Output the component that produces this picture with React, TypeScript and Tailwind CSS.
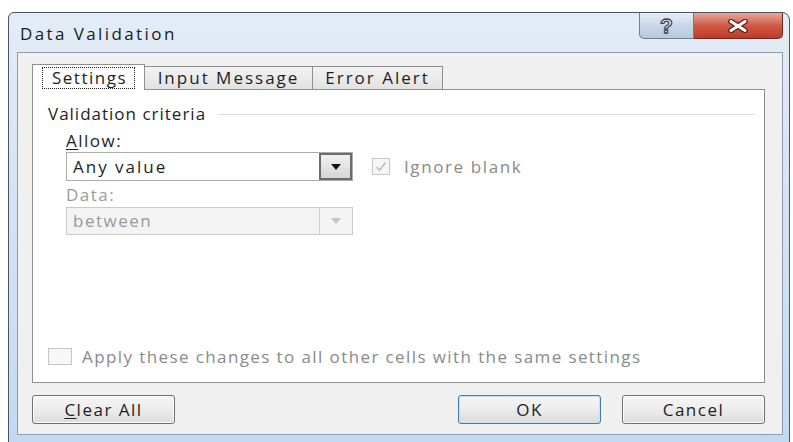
import React from "react";

const ui = { fontFamily: '"Open Sans", "Noto Sans", Arial, sans-serif' };

function ComboArrow({ disabled }: { disabled?: boolean }) {
  return (
    <div
      className={
        disabled
          ? "flex h-full w-[33px] items-center justify-center border-l border-[#d0d0d0] bg-[#f4f4f4]"
          : "flex h-full w-[33px] items-center justify-center border-2 border-[#6d6d6d] bg-gradient-to-b from-[#f2f2f2] to-[#d6d6d6]"
      }
    >
      <svg width="10" height="6" viewBox="0 0 10 6">
        <path d="M0 0h10L5 6z" fill={disabled ? "#c4c4c4" : "#111"} />
      </svg>
    </div>
  );
}

function Check({ checked }: { checked?: boolean }) {
  return (
    <div className="flex h-[17px] w-[18px] items-center justify-center border border-[#c6c6c6] bg-[#f6f6f6]">
      {checked && (
        <svg width="12" height="11" viewBox="0 0 12 11">
          <path d="M1.5 6l3 3.2L10.5 1.5" stroke="#b9bcc2" strokeWidth="1.6" fill="none" />
        </svg>
      )}
    </div>
  );
}

function Button({ label, mnemonic, primary }: { label: string; mnemonic?: boolean; primary?: boolean }) {
  return (
    <div
      className={
        "flex h-[29px] w-[143px] items-center justify-center rounded-[3px] border bg-gradient-to-b from-[#f6f6f6] via-[#ececec] to-[#dcdcdc] text-[17px] tracking-[1.5px] text-[#1e1e1e] " +
        (primary ? "border-[#3c7fb1] shadow-[inset_0_0_0_1px_#bfe2f6]" : "border-[#707070] shadow-[inset_0_0_0_1px_#fbfbfb]")
      }
    >
      {mnemonic ? (
        <span>
          <span className="underline underline-offset-2">{label.slice(0, 1)}</span>
          {label.slice(1)}
        </span>
      ) : (
        label
      )}
    </div>
  );
}

export default function App() {
  return (
    <div className="h-[442px] w-[793px] overflow-hidden bg-white pt-[12px]" style={ui}>
      {/* window frame */}
      <div className="ml-[8px] flex h-[440px] w-[782px] flex-col rounded-tl-[6px] rounded-tr-[8px] border border-[#4a5563] bg-gradient-to-b from-[#e3ecf6] via-[#d2e2f3] to-[#c3d9f0] pl-[8px] pr-[6px]">
        {/* title bar */}
        <div className="flex h-[39px] items-start justify-between">
          <div className="pl-[3px] pt-[11px] text-[17px] leading-[20px] tracking-[2.4px] text-[#1a1a1a]">Data Validation</div>
          <div className="flex">
            <div className="flex h-[26px] w-[55px] items-center justify-center rounded-bl-[5px] border border-t-0 border-[#6f7f92] bg-gradient-to-b from-[#e7eef6] via-[#c9d8e8] to-[#b6c8dc]">
              <span
                className="text-[21px] font-bold leading-none text-[#eef2f7]"
                style={{ WebkitTextStroke: "1.3px #3e4b5b", fontFamily: '"Liberation Sans", sans-serif' }}
              >
                ?
              </span>
            </div>
            <div className="flex h-[26px] w-[89px] items-center justify-center rounded-br-[5px] border border-l-0 border-t-0 border-[#6e2a22] bg-gradient-to-b from-[#e7a79b] via-[#cf5a46] to-[#c0392b]">
              <svg width="22" height="14" viewBox="0 0 22 14">
                <path d="M4 2.5l14 9M18 2.5l-14 9" stroke="#5a1c15" strokeWidth="5.5" strokeLinecap="round" />
                <path d="M4 2.5l14 9M18 2.5l-14 9" stroke="#fff" strokeWidth="3.2" strokeLinecap="round" />
              </svg>
            </div>
          </div>
        </div>

        {/* client area */}
        <div className="flex h-[383px] flex-col border border-[#8d9caf] bg-[#f0f0f0] pl-[14px] pr-[17px] pt-[10px] text-[17px] tracking-[1.5px] text-[#1e1e1e]">
          {/* tabs */}
          <div className="flex h-[26px] items-end">
            <div className="relative z-10 -mb-px flex h-[26px] w-[113px] items-center justify-center border border-b-0 border-[#8e8f8f] bg-white">
              <span className="border border-dotted border-[#222] pl-[9px] pr-[7px] leading-[20px]">Settings</span>
            </div>
            <div className="flex h-[23px] w-[168px] items-center justify-center border border-b-0 border-l-0 border-[#8e8f8f] bg-gradient-to-b from-[#f3f3f3] to-[#e2e2e2] tracking-[2px]">
              Input Message
            </div>
            <div className="flex h-[23px] w-[130px] items-center justify-center border border-b-0 border-l-0 border-[#8e8f8f] bg-gradient-to-b from-[#f3f3f3] to-[#e2e2e2] tracking-[2px]">
              Error Alert
            </div>
          </div>

          {/* settings panel */}
          <div className="flex h-[294px] flex-col border border-[#8e8f8f] bg-white pl-[15px] pr-[9px]">
            <div className="mt-[13px] flex items-center gap-[12px]">
              <span className="leading-[22px] tracking-[1px]">Validation criteria</span>
              <div className="h-px flex-1 bg-[#dcdcdc]" />
            </div>

            <div className="ml-[18px] mt-[5px] leading-[22px]">
              <span className="underline underline-offset-2">A</span>llow:
            </div>
            <div className="ml-[18px] flex items-start gap-[19px]">
              <div className="flex h-[29px] w-[287px] items-center border border-[#ababab] bg-white">
                <span className="flex-1 pl-[6px] tracking-[2px]">Any value</span>
                <ComboArrow />
              </div>
              <div className="mt-[2px] flex items-center gap-[14px]">
                <Check checked />
                <span className="text-[#8a8a8a] tracking-[1.6px]">Ignore blank</span>
              </div>
            </div>

            <div className="ml-[18px] mt-[3px] leading-[22px] text-[#9a9a9a]">Data:</div>
            <div className="ml-[18px] mt-[1px] flex h-[28px] w-[287px] items-center border border-[#cacaca] bg-[#f3f3f3]">
              <span className="flex-1 pl-[6px] text-[#9a9a9a]">between</span>
              <ComboArrow disabled />
            </div>

            <div className="flex-1" />
            <div className="mb-[13px] flex items-center gap-[10px]">
              <div className="h-[17px] w-[24px] border border-[#c6c6c6] bg-[#f7f7f7]" />
              <span className="text-[#8a8a8a] tracking-[1.4px]">Apply these changes to all other cells with the same settings</span>
            </div>
          </div>

          {/* dialog buttons */}
          <div className="mt-[12px] flex items-center">
            <Button label="Clear All" mnemonic />
            <div className="flex-1" />
            <Button label="OK" primary />
            <div className="w-[21px]" />
            <Button label="Cancel" />
          </div>
        </div>
      </div>
    </div>
  );
}
